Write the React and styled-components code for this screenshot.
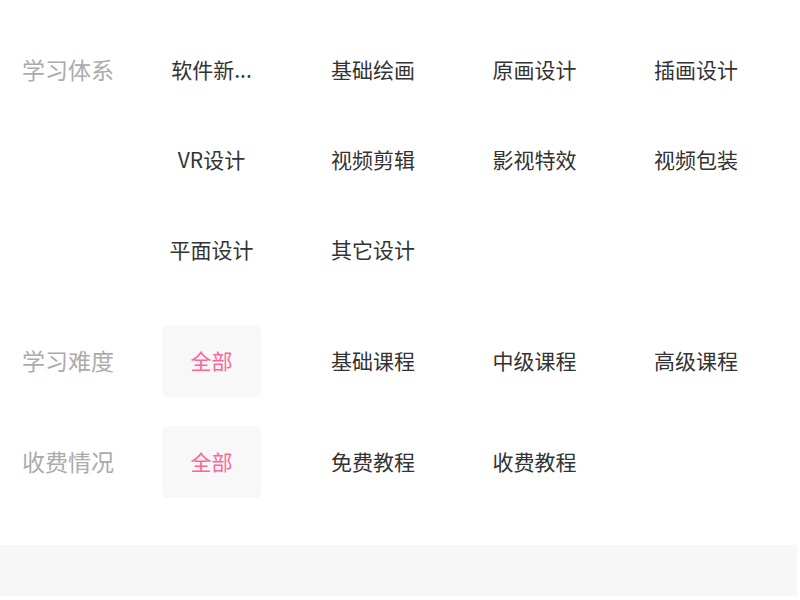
import styled, { createGlobalStyle } from "styled-components";

const GlobalStyle = createGlobalStyle`
  html, body {
    margin: 0;
    padding: 0;
    background: #fff;
  }
  body {
    font-family: "Noto Sans CJK SC", "Noto Sans", sans-serif;
  }
`;

const filters = [
  {
    label: "学习体系",
    gapAfter: 39,
    items: [
      "软件新...",
      "基础绘画",
      "原画设计",
      "插画设计",
      "VR设计",
      "视频剪辑",
      "影视特效",
      "视频包装",
      "平面设计",
      "其它设计",
    ],
    active: -1,
  },
  {
    label: "学习难度",
    gapAfter: 29,
    items: ["全部", "基础课程", "中级课程", "高级课程"],
    active: 0,
  },
  {
    label: "收费情况",
    gapAfter: 47,
    items: ["全部", "免费教程", "收费教程"],
    active: 0,
  },
];

const App = () => {
  return (
    <>
      <GlobalStyle />
      <Page>
        {filters.map((group) => (
          <FilterRow key={group.label} $gapAfter={group.gapAfter}>
            <Label>{group.label}</Label>
            <Options>
              {group.items.map((item, i) => (
                <Option key={item} $active={i === group.active}>
                  {item}
                </Option>
              ))}
            </Options>
          </FilterRow>
        ))}
        <Footer />
      </Page>
    </>
  );
};

export default App;

const Page = styled.div`
  padding-top: 34px;
  width: 800px;
`;

const FilterRow = styled.div`
  display: flex;
  align-items: flex-start;
  margin-bottom: ${(p) => p.$gapAfter}px;
`;

const Label = styled.div`
  width: 140px;
  padding-left: 22px;
  height: 72px;
  line-height: 70px;
  font-size: 23px;
  color: #ababab;
  flex-shrink: 0;
`;

const Options = styled.div`
  display: grid;
  grid-template-columns: repeat(4, 99px);
  column-gap: 62.5px;
  row-gap: 18px;
`;

const Option = styled.div`
  height: 72px;
  line-height: 70px;
  text-align: center;
  font-size: 21px;
  color: ${(p) => (p.$active ? "#ff6497" : "#333")};
  background: ${(p) => (p.$active ? "#f8f8f8" : "transparent")};
  border-radius: 5px;
  white-space: nowrap;
  overflow: hidden;
  cursor: pointer;
`;

const Footer = styled.div`
  width: 797px;
  height: 51px;
  background: #f7f7f7;
`;
